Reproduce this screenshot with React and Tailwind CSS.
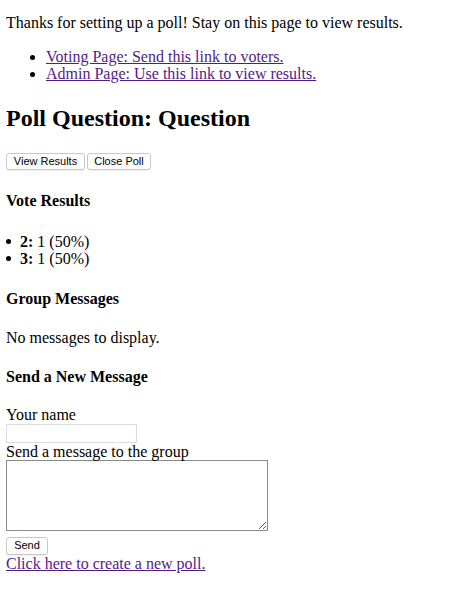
export default function App() {
  const serif = { fontFamily: '"Liberation Serif", "Times New Roman", serif' };
  const sans = { fontFamily: '"Liberation Sans", Arial, sans-serif' };
  const btn = "h-[17px] text-[11px] leading-[15px] border border-[#c8c8c8] rounded-[3px] bg-white shadow-[0_1px_0_rgba(0,0,0,0.06)]";
  const dot = <span className="inline-block w-[5px] h-[5px] rounded-full bg-black shrink-0 mt-[1px]" />;
  return (
    <div className="bg-white text-black px-[6px] pb-[20px] text-[16px] leading-[17px]" style={serif}>
      <p className="pt-[14px]">Thanks for setting up a poll! Stay on this page to view results.</p>
      <ul className="mt-[17px] pl-[24px]">
        <li className="flex items-center gap-[11px]">{dot}<a href="#" className="text-[#551a8b] underline">Voting Page: Send this link to voters.</a></li>
        <li className="flex items-center gap-[11px]">{dot}<a href="#" className="text-[#551a8b] underline">Admin Page: Use this link to view results.</a></li>
      </ul>
      <h1 className="text-[24px] leading-[28px] font-bold mt-[22px]">Poll Question: Question</h1>
      <div className="flex gap-[2px] mt-[21px]" style={sans}>
        <button className={btn + " w-[79px]"}>View Results</button>
        <button className={btn + " w-[64px]"}>Close Poll</button>
      </div>
      <h4 className="font-bold mt-[21.5px]">Vote Results</h4>
      <ul className="mt-[24px]">
        <li className="flex items-center gap-[9px]">{dot}<span><b>2:</b> 1 (50%)</span></li>
        <li className="flex items-center gap-[9px]">{dot}<span><b>3:</b> 1 (50%)</span></li>
      </ul>
      <h4 className="font-bold mt-[23px]">Group Messages</h4>
      <p className="mt-[22px]">No messages to display.</p>
      <h4 className="font-bold mt-[22px]">Send a New Message</h4>
      <div className="mt-[21px]">Your name</div>
      <input className="block mt-[1px] w-[131px] h-[19px] border border-[#dcdcdc] outline-none" />
      <div>Send a message to the group</div>
      <textarea className="block w-[262px] h-[71px] border border-[#8a8a8a] resize" />
      <button className={btn + " block mt-[6px] w-[42px] h-[18px]"} style={sans}>Send</button>
      <a href="#" className="text-[#551a8b] underline">Click here to create a new poll.</a>
    </div>
  );
}
